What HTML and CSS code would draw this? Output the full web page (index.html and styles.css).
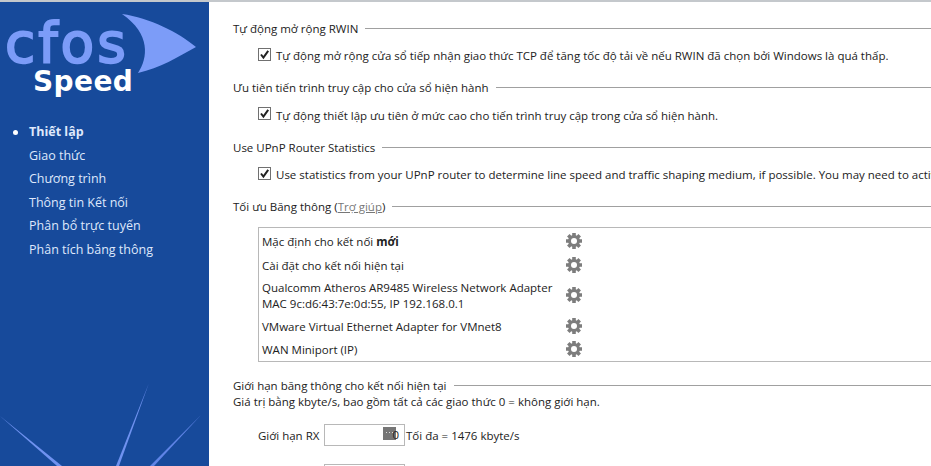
FILE: index.html
```html
<!DOCTYPE html>
<html lang="vi">

<head>
    <meta charset="UTF-8">
    <title>cFosSpeed</title>
    <link rel="stylesheet" href="styles.css">
</head>

<body>
    <div class="sidebar">
        <div class="logo">
            <svg class="fin" width="210" height="110" viewBox="0 0 210 110">
                <path d="M122 14 C150 18 178 32 196 47 C178 57 160 68 138 73 C148 58 151 34 122 14 Z" fill="#7c9cf8" />
            </svg>
            <div class="logo-cfos">cfos</div>
            <div class="logo-speed">Speed</div>
        </div>
        <ul class="nav">
            <li class="active">Thiết lập</li>
            <li>Giao thức</li>
            <li>Chương trình</li>
            <li>Thông tin Kết nối</li>
            <li>Phân bổ trực tuyến</li>
            <li>Phân tích băng thông</li>
        </ul>
        <svg class="rays" width="210" height="106" viewBox="0 0 210 106">
            <path d="M0 56 L62 106 L57 106 Z" fill="#6f92f0" />
            <path d="M149 23 L119 106 L116 106 Z" fill="#6f92f0" />
            <path d="M201 55 L154 106 L150 106 Z" fill="#5f84e6" />
        </svg>
    </div>
    <div class="main-content">
        <div class="section-title"><span>Tự động mở rộng RWIN</span></div>
        <label class="check-row"><span class="check"><svg width="11" height="11" viewBox="0 0 11 11"><path d="M2 5.5 L4.4 8.5 L9.2 1.8" /></svg></span>Tự động mở rộng cửa sổ tiếp nhận giao thức TCP để tăng tốc độ tải về nếu RWIN đã chọn bởi Windows là quá thấp.</label>

        <div class="section-title"><span>Ưu tiên tiến trình truy cập cho cửa sổ hiện hành</span></div>
        <label class="check-row"><span class="check"><svg width="11" height="11" viewBox="0 0 11 11"><path d="M2 5.5 L4.4 8.5 L9.2 1.8" /></svg></span>Tự động thiết lập ưu tiên ở mức cao cho tiến trình truy cập trong cửa sổ hiện hành.</label>

        <div class="section-title"><span>Use UPnP Router Statistics</span></div>
        <label class="check-row"><span class="check"><svg width="11" height="11" viewBox="0 0 11 11"><path d="M2 5.5 L4.4 8.5 L9.2 1.8" /></svg></span>Use statistics from your UPnP router to determine line speed and traffic shaping medium, if possible. You may need to activate</label>

        <div class="section-title"><span>Tối ưu Băng thông (<a href="#">Trợ giúp</a>)</span></div>
        <div class="conn-list">
            <div class="conn"><div class="conn-name">Mặc định cho kết nối <b>mới</b></div><svg class="gear" width="18" height="18" viewBox="0 0 18 18"><use href="#gear" /></svg></div>
            <div class="conn"><div class="conn-name">Cài đặt cho kết nối hiện tại</div><svg class="gear" width="18" height="18" viewBox="0 0 18 18"><use href="#gear" /></svg></div>
            <div class="conn conn-tall"><div class="conn-name">Qualcomm Atheros AR9485 Wireless Network Adapter<br>MAC 9c:d6:43:7e:0d:55, IP 192.168.0.1</div><svg class="gear" width="18" height="18" viewBox="0 0 18 18"><use href="#gear" /></svg></div>
            <div class="conn"><div class="conn-name">VMware Virtual Ethernet Adapter for VMnet8</div><svg class="gear" width="18" height="18" viewBox="0 0 18 18"><use href="#gear" /></svg></div>
            <div class="conn"><div class="conn-name">WAN Miniport (IP)</div><svg class="gear" width="18" height="18" viewBox="0 0 18 18"><use href="#gear" /></svg></div>
        </div>

        <div class="section-title limit-title"><span>Giới hạn băng thông cho kết nối hiện tại</span></div>
        <div class="note">Giá trị bằng kbyte/s, bao gồm tất cả các giao thức 0 = không giới hạn.</div>
        <div class="limit-row">
            <span class="limit-label">Giới hạn RX</span>
            <span class="limit-input"><span class="dots"></span><span class="limit-value">0</span></span>
            <span>Tối đa = 1476 kbyte/s</span>
        </div>
        <div class="limit-row">
            <span class="limit-label"></span>
            <span class="limit-input"></span>
        </div>
    </div>
    <svg width="0" height="0" class="defs">
        <defs>
            <g id="gear">
                <g stroke="#7d7d7d" stroke-width="3.6">
                    <path d="M9 1 V17 M1 9 H17 M3.3 3.3 L14.7 14.7 M14.7 3.3 L3.3 14.7" />
                </g>
                <circle cx="9" cy="9" r="6" fill="#7d7d7d" />
                <circle cx="9" cy="9" r="3" fill="#fff" />
            </g>
        </defs>
    </svg>
</body>

</html>
```

FILE: styles.css
```css
html,
body {
    height: 100%;
}

body {
    font-family: "Open Sans", "Noto Sans", sans-serif;
    font-size: 11.5px;
    color: #222;
    background-color: #fff;
    margin: 0;
    display: flex;
    overflow: hidden;
    border-top: 2px solid #c4c8cc;
    box-sizing: border-box;
}

.defs {
    position: absolute;
}

.sidebar {
    background-color: #174a9b;
    width: 209px;
    flex-shrink: 0;
    position: relative;
}

.logo {
    height: 118px;
    position: relative;
}

.fin {
    position: absolute;
    top: -2px;
    left: 0;
}

.logo-cfos {
    position: absolute;
    top: 16px;
    left: 5px;
    font-family: "DejaVu Sans", sans-serif;
    font-size: 55px;
    line-height: 50px;
    letter-spacing: 3px;
    color: #7c9cf8;
    -webkit-text-stroke: 2px #7c9cf8;
}

.logo-speed {
    position: absolute;
    top: 66px;
    left: 33px;
    font-family: "DejaVu Sans", sans-serif;
    font-weight: bold;
    font-size: 28px;
    line-height: 28px;
    letter-spacing: 0.4px;
    color: #fff;
}

.nav {
    list-style: none;
    margin: 0;
    padding: 0 0 0 29px;
    color: #dfe8fb;
    font-size: 12.5px;
}

.nav li {
    height: 23.6px;
    line-height: 24px;
}

.nav .active {
    font-weight: bold;
    position: relative;
}

.nav .active::before {
    content: "";
    position: absolute;
    left: -16px;
    top: 10px;
    width: 5px;
    height: 5px;
    border-radius: 50%;
    background-color: #fff;
}

.rays {
    position: absolute;
    left: 0;
    bottom: 0;
}

.main-content {
    flex-grow: 1;
    min-width: 0;
    padding: 17px 0 0 24px;
    white-space: nowrap;
}

.section-title {
    display: flex;
    align-items: center;
    height: 18px;
}

.section-title::after {
    content: "";
    flex-grow: 1;
    border-top: 1px solid #a0a0a0;
    margin-left: 7px;
}

.section-title a {
    color: #777;
}

.check-row {
    display: flex;
    align-items: center;
    height: 18px;
    margin: 9.5px 0 14px 25px;
}

.check {
    box-sizing: border-box;
    width: 13px;
    height: 13px;
    border: 1px solid #707070;
    background-color: #fff;
    margin-right: 5px;
    margin-top: -3px;
    flex-shrink: 0;
}

.check svg {
    display: block;
}

.check path {
    fill: none;
    stroke: #222;
    stroke-width: 2;
}

.conn-list {
    margin: 11.5px 0 0 25px;
    padding-top: 1px;
    border: 1px solid #b8b8b8;
    border-right: none;
}

.conn {
    display: flex;
    align-items: center;
    min-height: 24px;
    padding-left: 3px;
}

.conn:last-child {
    min-height: 23px;
}

.conn-tall {
    padding: 2px 0 2px 3px;
}

.conn-name {
    width: 303px;
    line-height: 16px;
    padding-top: 1px;
}

.gear {
    flex-shrink: 0;
    margin-top: -1px;
}

.limit-title {
    margin-top: 14px;
}

.note {
    line-height: 16px;
}

.limit-row {
    display: flex;
    align-items: center;
    margin: 14px 0 0 25px;
    height: 22px;
}

.limit-row + .limit-row {
    margin-top: 18px;
}

.limit-label {
    width: 66px;
}

.limit-input {
    position: relative;
    box-sizing: border-box;
    width: 81px;
    height: 22px;
    border: 1px solid #b8b8b8;
    margin-right: 1px;
    flex-shrink: 0;
}

.limit-value {
    position: absolute;
    right: 5px;
    top: 2px;
}

.dots {
    position: absolute;
    right: 8px;
    top: 2px;
    width: 13px;
    height: 13px;
    background-color: #767676;
}

.dots::before {
    content: "";
    position: absolute;
    left: 3px;
    top: 5px;
    width: 1px;
    height: 1px;
    background-color: #ddd;
    box-shadow: 3px 0 #ddd, 6px 0 #ddd;
}
```
